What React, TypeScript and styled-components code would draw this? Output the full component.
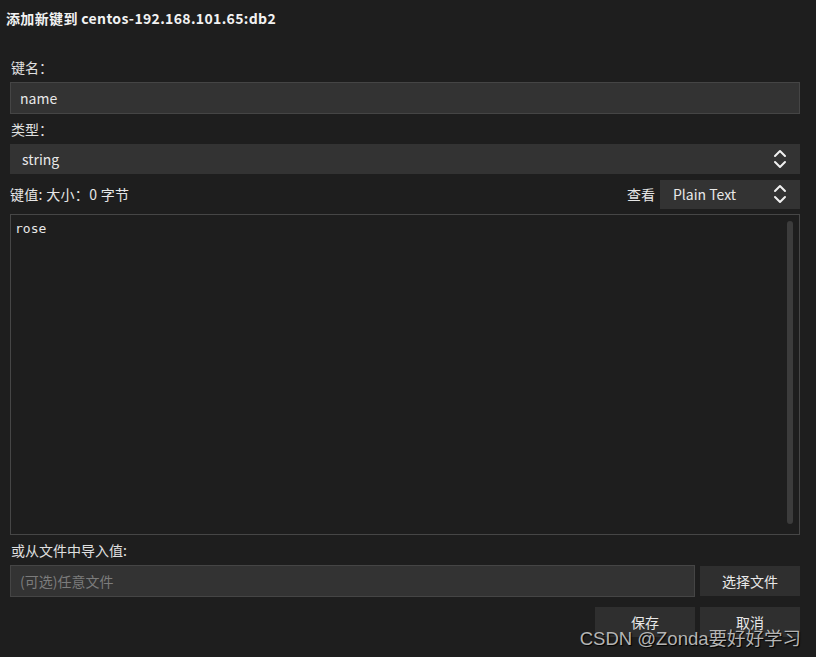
import React from "react";
import styled, { createGlobalStyle } from "styled-components";

const GlobalStyle = createGlobalStyle`
  html, body {
    margin: 0;
    padding: 0;
    background: #1e1e1e;
  }
  body {
    font-family: "Noto Sans CJK SC", "Noto Sans", sans-serif;
    color: #e6e6e6;
    text-spacing-trim: space-all;
  }
`;

const Dialog = styled.div`
  position: relative;
  width: 816px;
  height: 657px;
  box-sizing: border-box;
  padding: 0 16px 0 10px;
  display: flex;
  flex-direction: column;
  overflow: hidden;
  background: #1e1e1e;
`;

const Title = styled.div`
  height: 36px;
  margin-left: -4px;
  display: flex;
  align-items: center;
  font-size: 14px;
  font-weight: 700;
  letter-spacing: 0.35px;
  color: #f2f2f2;
`;

const Label = styled.div<{ $h: number; $top?: number }>`
  height: ${(p) => p.$h}px;
  margin-top: ${(p) => p.$top ?? 0}px;
  display: flex;
  align-items: center;
  padding-left: 1px;
  font-size: 14px;
  color: #e0e0e0;
`;

const Field = styled.div<{ $h: number; $border?: boolean }>`
  height: ${(p) => p.$h}px;
  box-sizing: border-box;
  background: #333333;
  border: 1px solid ${(p) => (p.$border ? "#454545" : "#333333")};
  display: flex;
  align-items: center;
  justify-content: space-between;
  padding: 0 12px 0 9px;
  font-size: 14px;
  color: #e8e8e8;
`;

const Placeholder = styled.span`
  color: #7c7c7c;
`;

const ValueRow = styled.div`
  height: 30px;
  margin-top: 5px;
  display: flex;
  align-items: center;
  justify-content: space-between;
`;

const ValueInfo = styled.span`
  font-size: 14px;
  letter-spacing: 0.3px;
`;

const ViewGroup = styled.div`
  display: flex;
  align-items: center;
  gap: 5px;
  font-size: 14px;
`;

const ViewSelect = styled(Field)`
  width: 140px;
  height: 29px;
  padding-left: 12px;
`;

const TextArea = styled.div`
  margin-top: 5px;
  height: 321px;
  box-sizing: border-box;
  border: 1px solid #464646;
  background: #1e1e1e;
  display: flex;
  justify-content: space-between;
  padding: 6px 6px 10px 4px;
`;

const Mono = styled.span`
  font-family: "DejaVu Sans Mono", "Liberation Mono", monospace;
  font-size: 13px;
  color: #e8e8e8;
  line-height: 16px;
`;

const ScrollThumb = styled.div`
  width: 6px;
  background: #3c3c3c;
  border-radius: 3px;
`;

const FileRow = styled.div`
  display: flex;
  gap: 5px;
  align-items: center;
  height: 32px;
`;

const FileInput = styled(Field)`
  flex: 1;
  height: 32px;
`;

const Button = styled.button`
  width: 100px;
  height: 30px;
  border: none;
  background: #2f2f2f;
  color: #e8e8e8;
  font-family: inherit;
  font-size: 14px;
  padding: 0;
`;

const Footer = styled.div`
  margin-top: 10px;
  display: flex;
  justify-content: flex-end;
  gap: 5px;
  ${Button} {
    height: 30px;
  }
`;

const Watermark = styled.div`
  position: absolute;
  right: 15px;
  bottom: 7px;
  font-family: "Liberation Sans", "Noto Sans CJK SC", sans-serif;
  font-size: 18.5px;
  color: #b4b4b4;
  text-shadow: 1px 1px 1px #000000;
`;

const Spinner: React.FC = () => (
  <svg width="14" height="22" viewBox="0 0 14 22" fill="none">
    <path d="M2 8 L7 3 L12 8" stroke="#f0f0f0" strokeWidth="2" strokeLinecap="round" strokeLinejoin="round" />
    <path d="M2 14 L7 19 L12 14" stroke="#f0f0f0" strokeWidth="2" strokeLinecap="round" strokeLinejoin="round" />
  </svg>
);

export default function App() {
  return (
    <>
      <GlobalStyle />
      <Dialog>
        <Title>添加新键到 centos-192.168.101.65:db2</Title>
        <Label $h={22} $top={20}>键名：</Label>
        <Field $h={32} $border style={{ marginTop: 4 }}>name</Field>
        <Label $h={30}>类型：</Label>
        <Field $h={30}>
          <span style={{ paddingLeft: 2 }}>string</span>
          <Spinner />
        </Field>
        <ValueRow>
          <ValueInfo>键值: 大小：0 字节</ValueInfo>
          <ViewGroup>
            <span>查看</span>
            <ViewSelect $h={29}>
              <span>Plain Text</span>
              <Spinner />
            </ViewSelect>
          </ViewGroup>
        </ValueRow>
        <TextArea>
          <Mono>rose</Mono>
          <ScrollThumb />
        </TextArea>
        <Label $h={30}>或从文件中导入值:</Label>
        <FileRow>
          <FileInput $h={32} $border>
            <Placeholder>(可选)任意文件</Placeholder>
          </FileInput>
          <Button>选择文件</Button>
        </FileRow>
        <Footer>
          <Button>保存</Button>
          <Button>取消</Button>
        </Footer>
        <Watermark>CSDN @Zonda要好好学习</Watermark>
      </Dialog>
    </>
  );
}
